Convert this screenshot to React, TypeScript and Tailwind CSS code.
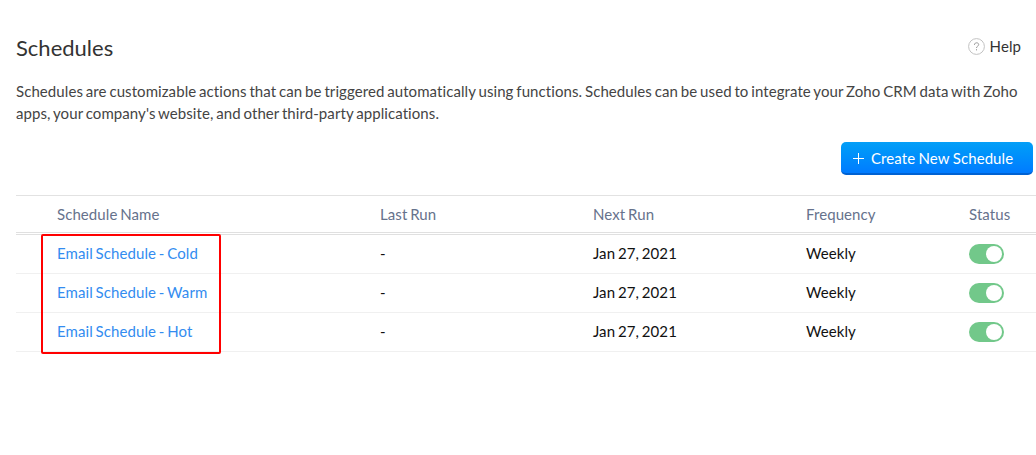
const rows = ['Cold', 'Warm', 'Hot'];

const columns = 'grid grid-cols-[323px_213px_213px_163px_1fr] pl-[41px]';

function Toggle() {
  return (
    <span className="flex h-5 w-[35px] items-center justify-end rounded-full bg-[#72c88a] pr-0.5">
      <span className="size-4 rounded-full bg-white" />
    </span>
  );
}

export default function App() {
  return (
    <main className="h-[455px] w-[1036px] overflow-hidden bg-white pl-4 font-['Lato',sans-serif] text-[15px] tracking-[0.08px] [word-spacing:-1.1px] text-[#111] [font-variant-ligatures:none]">
      <header className="flex h-[63px] items-start justify-between pt-[33px] pr-[15px]">
        <h1 className="text-[22px] leading-[30px] tracking-normal text-[#333]">Schedules</h1>
        <a className="flex items-center gap-[5px] leading-[26px] text-[#333]">
          <svg width="17" height="17" viewBox="0 0 17 17" fill="none">
            <circle cx="8.5" cy="8.5" r="7.9" stroke="#bbb" strokeWidth="0.9" />
            <path d="M6.4 6.9C6.4 4.1 10.7 4.2 10.7 6.6C10.7 8.2 8.5 8.1 8.5 10M8.5 11.2V12.4" stroke="#999" />
          </svg>
          Help
        </a>
      </header>
      <p className="mt-[17px] h-11 leading-[22px] whitespace-nowrap text-[#444]">
        Schedules are customizable actions that can be triggered automatically using functions. Schedules can be used to integrate your Zoho CRM data with Zoho<br />
        apps, your company's website, and other third-party applications.
      </p>
      <div className="mt-[18px] flex justify-end pr-[3px]">
        <button className="flex h-[33px] w-[192px] items-center gap-[7px] rounded-[5px] border-b-2 border-[#0062d2] bg-linear-to-b from-[#059ff7] to-[#007bff] pt-px pl-3 [word-spacing:-0.5px] text-white">
          <svg width="11" height="11" viewBox="0 0 11 11" stroke="currentColor"><path d="M5.5 0V11M0 5.5H11" /></svg>
          Create New Schedule
        </button>
      </div>
      <section className="relative mt-5">
        <div className={`${columns} h-[37px] items-center border-t border-[#e2e2e2] pt-px text-[#66728c]`}>
          <span>Schedule Name</span><span>Last Run</span><span>Next Run</span><span>Frequency</span><span>Status</span>
        </div>
        <div className="h-[3px] border-y border-[#e0e0e0]" />
        {rows.map((name) => (
          <div key={name} className={`${columns} h-[39px] items-center border-b border-[#f0f0f0]`}>
            <a className="pb-0.5 text-[#338cf0]">Email Schedule - {name}</a><span className="pb-0.5">-</span><span className="pb-0.5">Jan 27, 2021</span><span className="pb-0.5">Weekly</span><Toggle />
          </div>
        ))}
        <div className="absolute top-[39px] left-[25px] h-[120px] w-[180px] rounded-[2px] border-2 border-[#f00]" />
      </section>
    </main>
  );
}
